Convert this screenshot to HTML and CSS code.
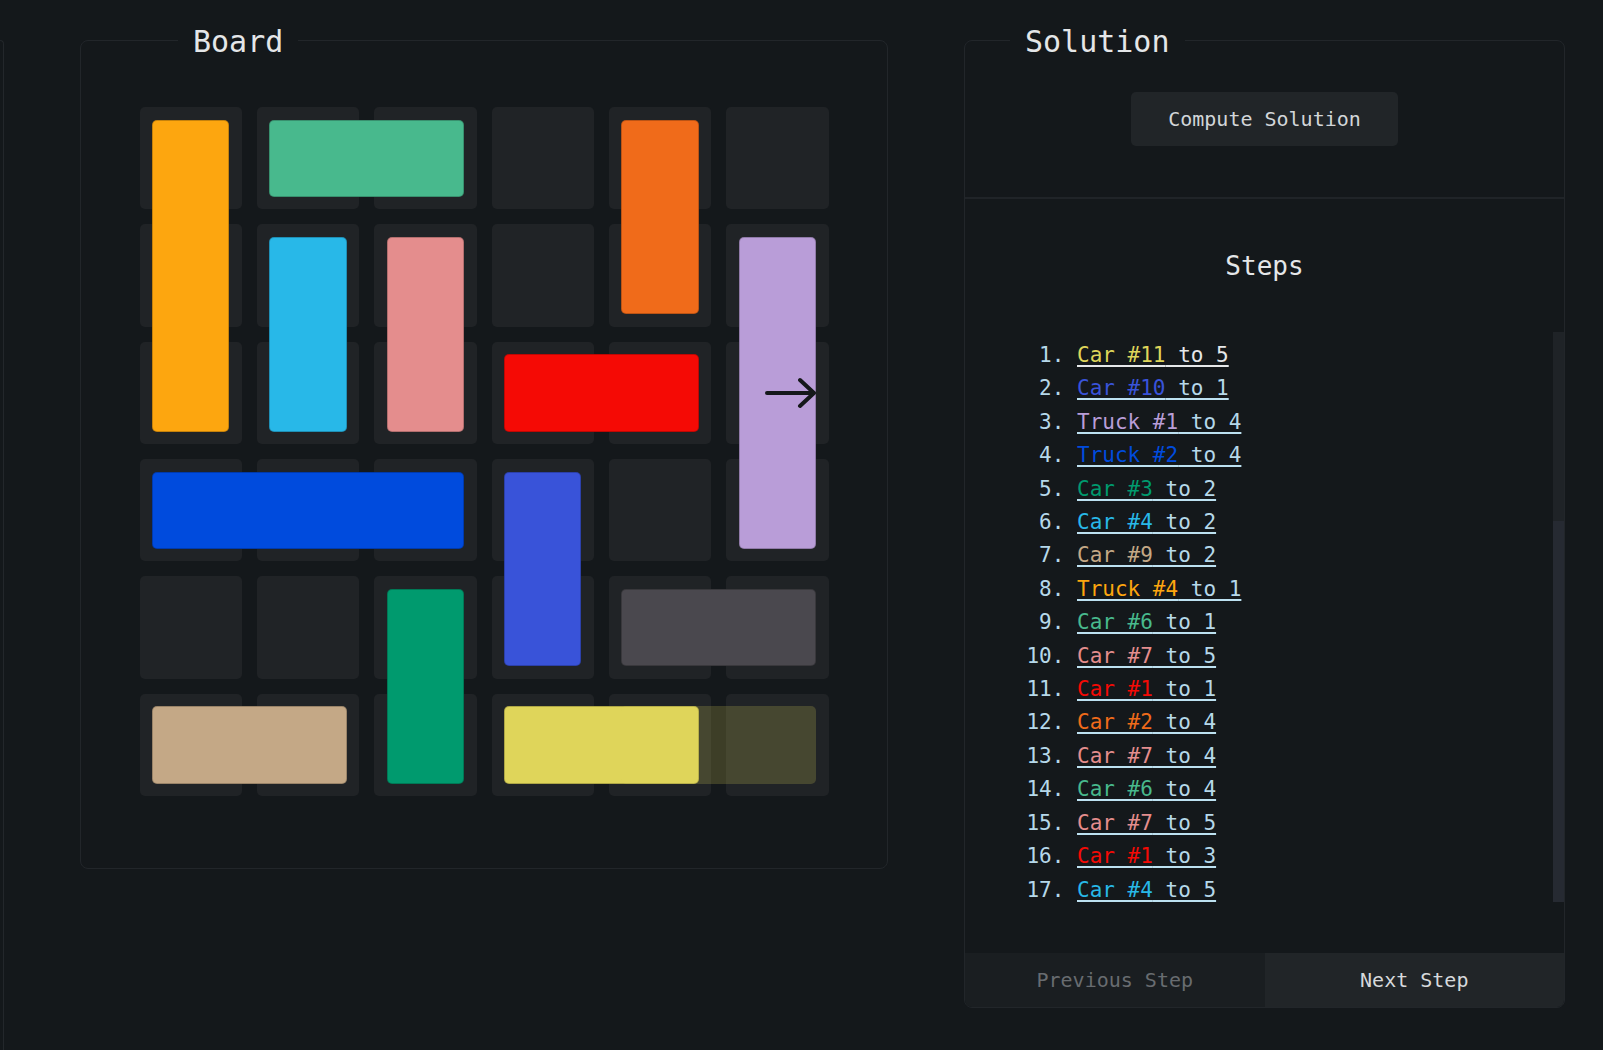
FILE: index.html
```html
<!DOCTYPE html>
<html lang="en">
<head>
<meta charset="utf-8">
<title>Rush Hour Solver</title>
<link rel="stylesheet" href="styles.css">
</head>
<body>
<main class="row">
  <div class="side"></div>

  <fieldset class="panel board-panel">
    <legend class="legend board-legend">Board</legend>
    <div class="board-wrap">
      <div class="board">
        <div class="cells">
          <div class="cell"></div><div class="cell"></div><div class="cell"></div><div class="cell"></div><div class="cell"></div><div class="cell"></div>
          <div class="cell"></div><div class="cell"></div><div class="cell"></div><div class="cell"></div><div class="cell"></div><div class="cell"></div>
          <div class="cell"></div><div class="cell"></div><div class="cell"></div><div class="cell"></div><div class="cell"></div><div class="cell"></div>
          <div class="cell"></div><div class="cell"></div><div class="cell"></div><div class="cell"></div><div class="cell"></div><div class="cell"></div>
          <div class="cell"></div><div class="cell"></div><div class="cell"></div><div class="cell"></div><div class="cell"></div><div class="cell"></div>
          <div class="cell"></div><div class="cell"></div><div class="cell"></div><div class="cell"></div><div class="cell"></div><div class="cell"></div>
        </div>
        <div class="pieces">
          <div class="piece ghost bg-yellow" style="grid-area: 6 / 5 / 7 / 7;"></div>
          <div class="piece bg-orange" style="grid-area: 1 / 1 / 4 / 2;"></div>
          <div class="piece bg-green" style="grid-area: 1 / 2 / 2 / 4;"></div>
          <div class="piece bg-redorange" style="grid-area: 1 / 5 / 3 / 6;"></div>
          <div class="piece bg-sky" style="grid-area: 2 / 2 / 4 / 3;"></div>
          <div class="piece bg-pink" style="grid-area: 2 / 3 / 4 / 4;"></div>
          <div class="piece bg-lavender target" style="grid-area: 2 / 6 / 5 / 7;">
            <svg class="arrow" width="51" height="32" viewBox="0 0 51 32" aria-hidden="true">
              <path d="M2 16 H49 M35 3 L49 16 L35 29" fill="none" stroke="#15181b" stroke-width="4" stroke-linecap="round" stroke-linejoin="round"/>
            </svg>
          </div>
          <div class="piece bg-red" style="grid-area: 3 / 4 / 4 / 6;"></div>
          <div class="piece bg-blue" style="grid-area: 4 / 1 / 5 / 4;"></div>
          <div class="piece bg-indigo" style="grid-area: 4 / 4 / 6 / 5;"></div>
          <div class="piece bg-gray" style="grid-area: 5 / 5 / 6 / 7;"></div>
          <div class="piece bg-teal" style="grid-area: 5 / 3 / 7 / 4;"></div>
          <div class="piece bg-tan" style="grid-area: 6 / 1 / 7 / 3;"></div>
          <div class="piece bg-yellow" style="grid-area: 6 / 4 / 7 / 6;"></div>
        </div>
      </div>
    </div>
  </fieldset>

  <fieldset class="panel solution-panel">
    <legend class="legend solution-legend">Solution</legend>
    <div class="compute-section">
      <button class="btn compute">Compute Solution</button>
    </div>
    <div class="steps-section">
      <h2 class="steps-title">Steps</h2>
      <div class="steps-scroll">
        <ol class="steps">
          <li><a class="step current"><span class="fg-yellow">Car #11</span> to 5</a></li>
          <li><a class="step"><span class="fg-indigo">Car #10</span> to 1</a></li>
          <li><a class="step"><span class="fg-lavender">Truck #1</span> to 4</a></li>
          <li><a class="step"><span class="fg-blue">Truck #2</span> to 4</a></li>
          <li><a class="step"><span class="fg-teal">Car #3</span> to 2</a></li>
          <li><a class="step"><span class="fg-sky">Car #4</span> to 2</a></li>
          <li><a class="step"><span class="fg-tan">Car #9</span> to 2</a></li>
          <li><a class="step"><span class="fg-orange">Truck #4</span> to 1</a></li>
          <li><a class="step"><span class="fg-green">Car #6</span> to 1</a></li>
          <li><a class="step"><span class="fg-pink">Car #7</span> to 5</a></li>
          <li><a class="step"><span class="fg-red">Car #1</span> to 1</a></li>
          <li><a class="step"><span class="fg-redorange">Car #2</span> to 4</a></li>
          <li><a class="step"><span class="fg-pink">Car #7</span> to 4</a></li>
          <li><a class="step"><span class="fg-green">Car #6</span> to 4</a></li>
          <li><a class="step"><span class="fg-pink">Car #7</span> to 5</a></li>
          <li><a class="step"><span class="fg-red">Car #1</span> to 3</a></li>
          <li><a class="step"><span class="fg-sky">Car #4</span> to 5</a></li>
        </ol>
        <div class="scrollbar">
          <div class="scroll-track"></div>
          <div class="scroll-thumb"></div>
        </div>
      </div>
    </div>
    <div class="nav">
      <button class="nav-btn prev">Previous Step</button>
      <button class="nav-btn next">Next Step</button>
    </div>
  </fieldset>
</main>
</body>
</html>
```
FILE: styles.css
```css
* { box-sizing: border-box; }

html, body {
  margin: 0;
  padding: 0;
  background: #14181b;
  overflow: hidden;
  height: 100%;
}

body {
  font-family: "DejaVu Sans Mono", "Liberation Mono", monospace;
  color: #e4e6e8;
}

.row {
  display: flex;
  align-items: flex-start;
  gap: 76px;
  padding-top: 24px;
}

.side {
  flex: 0 0 4px;
  width: 4px;
  height: 1100px;
  margin-top: 16px;
  border-top: 1px solid #23272b;
  border-right: 1px solid #23272b;
  border-top-right-radius: 8px;
}

.panel {
  margin: 0;
  padding: 0;
  min-width: 0;
  border: 1px solid #22262a;
  border-radius: 8px;
  background: #14181b;
}

.legend {
  font-size: 30px;
  line-height: 30px;
  padding: 3px 15px 0;
  color: #e4e6e8;
}

.board-legend { margin-left: 97px; }
.solution-legend { margin-left: 45px; }

.board-panel {
  flex: 0 0 808px;
  width: 808px;
}

.board-wrap {
  padding: 50px 0 72px;
  display: flex;
  justify-content: center;
}

.board {
  position: relative;
  width: 689px;
  height: 689px;
}

.cells, .pieces {
  display: grid;
  grid-template-columns: repeat(6, 1fr);
  grid-template-rows: repeat(6, 1fr);
  gap: 15px;
  width: 100%;
  height: 100%;
}

.pieces {
  position: absolute;
  inset: 0;
}

.cell {
  background: #202326;
  border-radius: 5px;
}

.piece {
  margin: 12.5px;
  border-radius: 5px;
  border: 1px solid rgba(0, 0, 0, 0.22);
}

.ghost {
  opacity: 0.2;
  border-color: transparent;
}

.target {
  display: flex;
  align-items: center;
  justify-content: flex-end;
}

.arrow {
  display: block;
  margin-right: -1px;
}

.bg-orange { background: #fda60f; }
.bg-green { background: #48b98d; }
.bg-redorange { background: #f06b1a; }
.bg-sky { background: #28b8e8; }
.bg-pink { background: #e48d8d; }
.bg-lavender { background: #b99dd8; }
.bg-red { background: #f50a05; }
.bg-blue { background: #004bdd; }
.bg-indigo { background: #3953d9; }
.bg-gray { background: #4a484e; }
.bg-teal { background: #009a6e; }
.bg-tan { background: #c4a886; }
.bg-yellow { background: #dfd55a; }

.fg-orange { color: #fda60f; }
.fg-green { color: #48b98d; }
.fg-redorange { color: #f06b1a; }
.fg-sky { color: #28b8e8; }
.fg-pink { color: #e48d8d; }
.fg-lavender { color: #b99dd8; }
.fg-red { color: #f50a05; }
.fg-blue { color: #004bdd; }
.fg-indigo { color: #3953d9; }
.fg-teal { color: #009a6e; }
.fg-tan { color: #c4a886; }
.fg-yellow { color: #dfd55a; }

/* Solution panel */
.solution-panel {
  flex: 0 0 601px;
  width: 601px;
}

.compute-section {
  display: flex;
  justify-content: center;
  padding: 35px 0 51px;
  border-bottom: 2px solid #202428;
}

.btn {
  font-family: inherit;
  font-size: 20px;
  line-height: 30px;
  padding: 12px 37px;
  background: #212528;
  color: #d2d6d9;
  border: none;
  border-radius: 5px;
}

.steps-section {
  padding: 52px 0 51px;
}

.steps-title {
  margin: 0 0 50px;
  font-size: 26px;
  line-height: 31px;
  font-weight: normal;
  text-align: center;
  color: #e4e6e8;
}

.steps-scroll {
  display: flex;
  height: 570px;
}

.steps {
  flex: 1;
  margin: 0;
  padding: 7px 0 0 112px;
  font-size: 21px;
  line-height: 33.4px;
  color: #b6d8ea;
  overflow: hidden;
}

.step {
  color: #b6d8ea;
  text-decoration: underline;
  text-decoration-thickness: 2px;
  text-underline-offset: 3px;
  text-decoration-color: #bde1f1;
  cursor: pointer;
}

.step.current {
  color: #e6e8ea;
  text-decoration-color: #e6e8ea;
}

.scrollbar {
  flex: 0 0 11px;
  display: flex;
  flex-direction: column;
}

.scroll-track {
  height: 189px;
  background: #1f2327;
}

.scroll-thumb {
  flex: 1;
  background: #262a32;
}

.nav {
  display: flex;
}

.nav-btn {
  flex: 1;
  font-family: inherit;
  font-size: 20px;
  line-height: 54px;
  padding: 0;
  border: none;
}

.prev {
  background: #1a1e21;
  color: #686c70;
  border-bottom-left-radius: 7px;
}

.next {
  background: #212528;
  color: #d6d9dc;
  border-bottom-right-radius: 7px;
}
```
